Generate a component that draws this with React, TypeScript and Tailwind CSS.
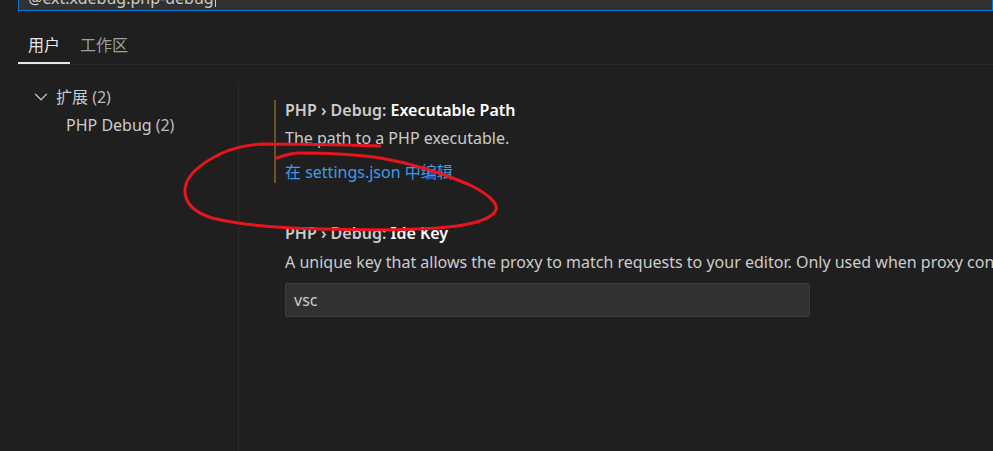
import React from 'react';
import { ChevronDown } from 'lucide-react';

const font = { fontFamily: '"Noto Sans", "Noto Sans CJK SC", sans-serif' };

const SettingTitle = ({ name }: { name: string }) => (
  <div className="h-[20px] leading-[20px] font-semibold text-[#cccccc] whitespace-nowrap">
    PHP › Debug: <span className="text-[#ffffff]">{name}</span>
  </div>
);

export default function App() {
  return (
    <div
      className="relative w-[993px] h-[451px] overflow-hidden bg-[#1f1f1f] text-[16px] text-[#cccccc] flex flex-col"
      style={font}
    >
      {/* search box, scrolled up */}
      <div className="pl-[18px] -mt-[21px]">
        <div className="h-[32px] border border-[#0078d4] bg-[#313131] pl-[9px] pt-[8px] flex items-start">
          <span className="leading-[20px] text-[#cccccc] whitespace-nowrap">@ext:xdebug.php-debug</span>
          <span className="w-px h-[19px] bg-[#cccccc] ml-px" />
        </div>
      </div>

      {/* tabs */}
      <div className="ml-[18px] mt-[24px] flex border-b border-[#2b2b2b]">
        <div className="px-[10px] pb-[7px] border-b-2 border-[#e7e7e7] leading-[20px] text-[#e7e7e7]">用户</div>
        <div className="px-[10px] pb-[7px] leading-[20px] text-[#9d9d9d]">工作区</div>
      </div>

      <div className="flex flex-1">
        {/* tree */}
        <div className="w-[238px] pt-[18px] text-[#cccccc]">
          <div className="h-[28px] flex items-center pl-[30px] gap-[4px]">
            <ChevronDown size={22} strokeWidth={1.3} className="text-[#c5c5c5]" />
            <span>扩展 <span className="text-[#bbbbbb]">(2)</span></span>
          </div>
          <div className="h-[28px] flex items-center pl-[66px]">
            PHP Debug <span className="ml-1 text-[#bbbbbb]">(2)</span>
          </div>
        </div>

        <div className="mt-[17px] border-l border-[#2b2b2b]" />

        {/* settings list */}
        <div className="flex-1 min-w-0 pt-[35px]">
          <div className="ml-[35px] border-l-2 border-[#6b5420] pl-[9px] pb-[1px]">
            <SettingTitle name="Executable Path" />
            <div className="mt-[8px] leading-[20px]">The path to a PHP executable.</div>
            <div className="mt-[14px] leading-[20px] text-[#3e9be9]">在 settings.json 中编辑</div>
          </div>

          <div className="ml-[35px] border-l-2 border-transparent pl-[9px] pt-[40px]">
            <SettingTitle name="Ide Key" />
            <div className="mt-[9px] leading-[20px] whitespace-nowrap">
              A unique key that allows the proxy to match requests to your editor. Only used when proxy configuration includes replacement of the key.
            </div>
            <div className="mt-[11px] w-[525px] h-[34px] rounded-[2px] bg-[#313131] border border-[#3c3c3c] flex items-center pl-[8px] text-[#cccccc]">
              vsc
            </div>
          </div>
        </div>
      </div>

      {/* red hand-drawn annotation */}
      <svg className="absolute left-0 top-0 pointer-events-none" width="993" height="451" viewBox="0 0 993 451" fill="none">
        <path
          d="M277 158 C285 155 292 153 300 153 C330 153 360 155 380 158 C410 163 440 172 470 185 C490 195 500 205 495 212 C488 221 465 226 437 228 C400 231 360 230 320 229 C280 228 240 225 212 218 C190 211 184 200 185 188 C187 175 200 164 220 154 C232 148 245 145 262 144 C300 144 345 145 380 146"
          stroke="#e8151d"
          strokeWidth="3"
          strokeLinecap="round"
          strokeLinejoin="round"
        />
      </svg>
    </div>
  );
}
